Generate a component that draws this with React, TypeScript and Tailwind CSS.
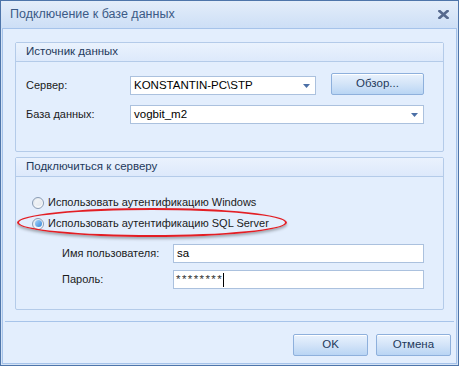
import React from 'react';

const font = { fontFamily: '"Liberation Sans", "DejaVu Sans", sans-serif' };

function Combo({ value, width }: { value: string; width: string }) {
  return (
    <div
      className={`flex h-[19px] ${width} items-center justify-between border border-[#abc1de] bg-white pl-[3px] pr-[5px] text-[11.5px] text-black`}
    >
      <span className="leading-none">{value}</span>
      <svg width="7" height="4" viewBox="0 0 7 4">
        <path d="M0 0h7L3.5 4z" fill="#4b6fa6" />
      </svg>
    </div>
  );
}

function Btn({ label, className = '' }: { label: string; className?: string }) {
  return (
    <button
      type="button"
      className={`flex h-[22px] items-center justify-center rounded-[2px] border border-[#8eb0dc] bg-gradient-to-b from-[#e9f2fd] via-[#d3e4f8] to-[#b9d5f4] text-[11.5px] text-[#1e395b] shadow-[inset_0_1px_0_#ffffff] ${className}`}
    >
      {label}
    </button>
  );
}

function Radio({ checked }: { checked?: boolean }) {
  return (
    <span className="flex h-[12px] w-[12px] items-center justify-center rounded-full border border-[#8a9cb4] bg-gradient-to-br from-[#dfe5ec] to-white">
      {checked ? (
        <span className="h-[7px] w-[7px] rounded-full bg-gradient-to-br from-[#a8d6fb] to-[#2f86d8]" />
      ) : (
        <span className="h-[7px] w-[7px] rounded-full bg-gradient-to-br from-[#f4f6f8] to-[#e3e8ee]" />
      )}
    </span>
  );
}

function Group({ title, children, className = '' }: { title: string; children: React.ReactNode; className?: string }) {
  return (
    <div className={`flex flex-col rounded-[2px] border border-[#b4cbe9] bg-[#e3eefd] ${className}`}>
      <div className="flex h-[19px] items-center border-b border-[#b4cbe9] bg-gradient-to-b from-[#eaf2fd] to-[#dde9fb] pl-[10px] text-[11.5px] text-[#1e395b]">
        {title}
      </div>
      {children}
    </div>
  );
}

export default function App() {
  return (
    <div className="h-[366px] w-[459px] overflow-hidden bg-white" style={font}>
      <div className="flex h-full w-full flex-col border border-[#4e75aa] bg-[#d4e3f6]">
        <div className="flex h-[27px] shrink-0 items-center justify-between bg-gradient-to-b from-[#e3edfa] to-[#cddff6] pl-[9px] pr-[9px]">
          <span className="text-[12.5px] text-[#3b5a86]">Подключение к базе данных</span>
          <svg width="11" height="9" viewBox="0 0 11 9">
            <path d="M1.5 1l8 7M9.5 1l-8 7" stroke="#56698d" strokeWidth="2.6" strokeLinecap="square" />
          </svg>
        </div>
        <div className="relative mx-[1px] mb-[1px] flex flex-1 flex-col border border-[#a6c3ea] bg-[#e3eefd] px-[12px] pt-[13px]">
          <Group title="Источник данных" className="h-[110px]">
            <div className="flex flex-col gap-[10px] pl-[10px] pr-[17px] pt-[11px]">
              <div className="flex items-end">
                <span className="flex h-[19px] w-[104px] items-center text-[11px] text-[#1b1b1b]">Сервер:</span>
                <Combo value="KONSTANTIN-PC\STP" width="w-[186px]" />
                <Btn label="Обзор..." className="ml-[15px] w-[93px]" />
              </div>
              <div className="flex items-center">
                <span className="w-[104px] text-[11px] text-[#1b1b1b]">База данных:</span>
                <Combo value="vogbit_m2" width="w-[294px]" />
              </div>
            </div>
          </Group>
          <Group title="Подключиться к серверу" className="mt-[5px] h-[153px]">
            <div className="flex flex-col pl-[16px] pr-[17px] pt-[15px]">
              <div className="flex h-[21px] items-center gap-[4px] text-[11px] text-[#1b1b1b]">
                <Radio />
                <span>Использовать аутентификацию Windows</span>
              </div>
              <div className="flex h-[21px] items-center gap-[4px] text-[11px] text-[#1b1b1b]">
                <Radio checked />
                <span>Использовать аутентификацию SQL Server</span>
              </div>
              <div className="mt-[10px] flex flex-col gap-[7px] pl-[30px]">
                <div className="flex items-center">
                  <span className="w-[111px] text-[11px] text-[#1b1b1b]">Имя пользователя:</span>
                  <div className="flex h-[19px] w-[251px] items-center border border-[#abc1de] bg-white pl-[3px] text-[11.5px] text-black">
                    sa
                  </div>
                </div>
                <div className="flex items-center">
                  <span className="w-[111px] text-[11px] text-[#1b1b1b]">Пароль:</span>
                  <div className="flex h-[19px] w-[251px] items-center border border-[#abc1de] bg-white pl-[2px] text-[11.5px] text-[#333]">
                    <span className="leading-none tracking-[1.4px]">********</span>
                    <span className="h-[14px] w-[1px] bg-black" />
                  </div>
                </div>
              </div>
            </div>
          </Group>
          <div className="mx-[-10px] mt-[11px] h-[1px] bg-[#a7c4ea]" />
          <div className="mr-[-7px] mt-[12px] flex justify-end gap-[8px]">
            <Btn label="OK" className="w-[75px]" />
            <Btn label="Отмена" className="w-[75px]" />
          </div>
          <div className="pointer-events-none absolute left-[14px] top-[179px] h-[29px] w-[270px] rounded-[50%] border-2 border-[#e31e24] shadow-[0_2px_3px_rgba(0,0,0,0.3)]" />
        </div>
      </div>
    </div>
  );
}
